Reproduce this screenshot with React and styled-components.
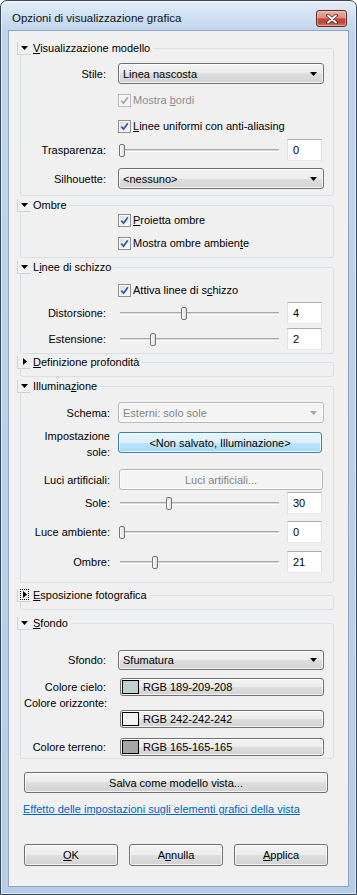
import styled, { createGlobalStyle } from "styled-components";

const FONT = `"Liberation Sans", Arial, sans-serif`;

const GlobalStyle = createGlobalStyle`
  html, body { margin: 0; padding: 0; background: #ffffff; }
  body { font-family: ${FONT}; font-size: 11px; color: #000; }
  * { box-sizing: border-box; }
`;

const Window = styled.div`
  width: 357px;
  height: 895px;
  border: 1px solid #3a4858;
  border-radius: 7px 7px 0 0;
  background: linear-gradient(180deg, #e4eef9 0px, #d2e1f2 14px, #bfd4ec 30px, #b6cde9 100%);
  box-shadow: inset 0 0 0 1px rgba(255, 255, 255, 0.55);
  padding: 0 7px 7px 7px;
  display: flex;
  flex-direction: column;
  overflow: hidden;
`;

const TitleBar = styled.header`
  height: 29px;
  flex: none;
  display: flex;
  align-items: flex-start;
  padding-left: 4px;
`;

const Title = styled.div`
  margin-top: 10px;
  font-size: 11.5px;
  line-height: 14px;
  color: #111;
`;

const CloseBtn = styled.div`
  margin: 9px 2px 0 auto;
  width: 31px;
  height: 17px;
  border: 1px solid #5c2c2a;
  border-radius: 3px;
  background: linear-gradient(180deg, #eab0a3 0%, #dc8c7e 45%, #c74c3d 52%, #bf4536 75%, #d7735f 100%);
  box-shadow: inset 0 0 0 1px rgba(255, 220, 210, 0.45);
  display: flex;
  align-items: center;
  justify-content: center;
`;

const Client = styled.main`
  flex: 1;
  background: #f0f0f0;
  border: 1px solid #8fa4bd;
  padding: 10px 0 0 11px;
  display: flex;
  flex-direction: column;
  align-items: flex-start;
`;

const Group = styled.fieldset`
  width: 314px;
  min-inline-size: 0;
  margin: ${(p) => p.$mt || 0}px 0 0 0;
  padding: 0 0 ${(p) => p.$pb || 0}px 0;
  border: 1px solid #d5dfe5;
  border-radius: 3px;
`;

const Legend = styled.legend`
  margin-left: -4px;
  padding: 0 3px 0 0;
  height: 14px;
  line-height: 14px;
`;

const LegendInner = styled.span`
  display: flex;
  align-items: center;
  gap: 2px;
  height: 14px;
`;

const Toggle = styled.span`
  width: 14px;
  height: 13px;
  display: flex;
  align-items: center;
  justify-content: center;
  border-left: 1px solid #cdd5db;
  border-bottom: 1px solid #cdd5db;
`;

const FocusRing = styled.span`
  width: 9px;
  height: 11px;
  display: flex;
  align-items: center;
  justify-content: center;
  border: 1px dotted #000;
`;

const U = styled.span`
  text-decoration: underline;
  text-underline-offset: 1px;
`;

const Row = styled.div`
  display: flex;
  align-items: ${(p) => p.$align || "center"};
  height: ${(p) => p.$h}px;
  margin-top: ${(p) => p.$mt || 0}px;
`;

const Label = styled.div`
  width: 97px;
  flex: none;
  padding-right: ${(p) => (p.$pr ?? 12)}px;
  text-align: right;
  line-height: ${(p) => p.$lh || 14}px;
  white-space: nowrap;
`;

const FreeLabel = styled.div`
  height: 14px;
  line-height: 14px;
  padding-left: 3px;
`;

const Combo = styled.div`
  width: 206px;
  height: ${(p) => p.$h || 21}px;
  display: flex;
  align-items: center;
  justify-content: space-between;
  padding: 0 6px 0 4px;
  border: 1px solid ${(p) => (p.$disabled ? "#b4b8bb" : "#707070")};
  border-radius: 3px;
  background: ${(p) =>
    p.$disabled
      ? "#f4f4f4"
      : "linear-gradient(180deg, #f3f3f3 0%, #ececec 50%, #dedede 50%, #d2d2d2 100%)"};
  box-shadow: inset 0 0 0 1px rgba(255, 255, 255, 0.75);
  color: ${(p) => (p.$disabled ? "#858585" : "#000")};
`;

const Btn = styled.div`
  width: ${(p) => p.$w}px;
  height: ${(p) => p.$h || 21}px;
  flex: none;
  margin-left: ${(p) => p.$ml || 0}px;
  margin-top: ${(p) => p.$mt || 0}px;
  display: flex;
  align-items: center;
  justify-content: ${(p) => p.$justify || "center"};
  gap: ${(p) => p.$gap || 0}px;
  padding: 0 1px;
  border: 1px solid
    ${(p) => (p.$variant === "hover" ? "#3c7fb1" : p.$variant === "disabled" ? "#b4b8bb" : "#707070")};
  border-radius: 3px;
  color: ${(p) => (p.$variant === "disabled" ? "#858585" : "#000")};
  background: ${(p) =>
    p.$variant === "hover"
      ? "linear-gradient(180deg, #eaf6fd 0%, #d9f0fc 50%, #bee6fd 50%, #a7d9f5 100%)"
      : p.$variant === "disabled"
      ? "#f4f4f4"
      : "linear-gradient(180deg, #f3f3f3 0%, #ececec 50%, #dedede 50%, #d2d2d2 100%)"};
  box-shadow: inset 0 0 0 1px rgba(255, 255, 255, 0.75);
  white-space: nowrap;
`;

const Swatch = styled.span`
  width: 17px;
  height: 14px;
  flex: none;
  border: 1px solid #000;
  background: ${(p) => p.$c};
`;

const SliderBox = styled.div`
  width: 169px;
  height: 100%;
  flex: none;
  display: flex;
  align-items: center;
  padding: 0 8px 0 2px;
`;

const Track = styled.div`
  flex: 1;
  height: 3px;
  position: relative;
  border-top: 1px solid #a9a9a9;
  border-bottom: 1px solid #ffffff;
  background: #d9d9d9;
`;

const Thumb = styled.span`
  position: absolute;
  top: 50%;
  width: 6px;
  height: 13px;
  margin-top: -6.5px;
  border: 1px solid #767676;
  border-radius: 2px;
  background: linear-gradient(90deg, #fdfdfd, #dcdcdc);
`;

const NumBox = styled.div`
  width: 35px;
  height: 22px;
  flex: none;
  background: #fff;
  border: 1px solid;
  border-color: #abadb3 #e2e3ea #e3e9ef #e2e3ea;
  padding: 3px 5px;
  line-height: 14px;
`;

const Box = styled.span`
  width: 13px;
  height: 13px;
  flex: none;
  display: flex;
  align-items: center;
  justify-content: center;
  border: 1px solid ${(p) => (p.$disabled ? "#bcbcbc" : "#8e8f8f")};
  background: ${(p) =>
    p.$disabled ? "#f4f4f4" : "linear-gradient(135deg, #d6d8dc 0%, #eef0f2 55%, #fbfbfb 100%)"};
  box-shadow: inset 0 0 0 1px #f6f6f6;
`;

const CheckText = styled.span`
  margin-left: 2px;
  line-height: 14px;
  color: ${(p) => (p.$disabled ? "#8d8d8d" : "#000")};
`;

const Link = styled.a`
  display: block;
  margin: 8px 0 0 3px;
  height: 16px;
  line-height: 16px;
  color: #0066cc;
  text-decoration: underline;
  cursor: pointer;
`;

const Footer = styled.div`
  display: flex;
  gap: 11px;
  margin: 27px 0 0 4px;
`;

function Arrow({ dir = "down", color = "#000" }) {
  if (dir === "right")
    return (
      <svg width="4" height="7" viewBox="0 0 4 7">
        <polygon points="0,0 4,3.5 0,7" fill={color} />
      </svg>
    );
  return (
    <svg width="7" height="4" viewBox="0 0 7 4">
      <polygon points="0,0 7,0 3.5,4" fill={color} />
    </svg>
  );
}

function Section({ title, open = true, focus, mt, pb, children }) {
  const arrow = <Arrow dir={open ? "down" : "right"} />;
  return (
    <Group $mt={mt} $pb={pb}>
      <Legend>
        <LegendInner>
          <Toggle>{focus ? <FocusRing>{arrow}</FocusRing> : arrow}</Toggle>
          <span>{title}</span>
        </LegendInner>
      </Legend>
      {children}
    </Group>
  );
}

function Check({ children, disabled, mt }) {
  return (
    <Row $h={14} $mt={mt}>
      <Label />
      <Box $disabled={disabled}>
        <svg width="9" height="9" viewBox="0 0 9 9">
          <path
            d="M1.3 4.6 L3.6 7.1 L7.9 1.3"
            fill="none"
            stroke={disabled ? "#a9a9a9" : "#3b57a6"}
            strokeWidth="1.7"
          />
        </svg>
      </Box>
      <CheckText $disabled={disabled}>{children}</CheckText>
    </Row>
  );
}

function ComboRow({ label, value, disabled, mt, h, pr }) {
  return (
    <Row $h={h || 21} $mt={mt}>
      <Label $pr={pr}>{label}</Label>
      <Combo $disabled={disabled} $h={h}>
        <span>{value}</span>
        <Arrow color={disabled ? "#a6a6a6" : "#000"} />
      </Combo>
    </Row>
  );
}

function SliderRow({ label, value, max, mt, pr }) {
  const left = (value / max) * 156 - 1;
  return (
    <Row $h={22} $mt={mt}>
      <Label $pr={pr}>{label}</Label>
      <SliderBox>
        <Track>
          <Thumb style={{ left: `${left}px` }} />
        </Track>
      </SliderBox>
      <NumBox>{value}</NumBox>
    </Row>
  );
}

function ColorRow({ label, rgb, mt }) {
  return (
    <Row $h={18} $mt={mt}>
      <Label>{label}</Label>
      <Btn $w={204} $h={18} $ml={2} $gap={4} $justify="flex-start">
        <Swatch $c={`rgb(${rgb.join(",")})`} />
        <span>RGB {rgb.join("-")}</span>
      </Btn>
    </Row>
  );
}

export default function App() {
  return (
    <>
      <GlobalStyle />
      <Window>
        <TitleBar>
          <Title>Opzioni di visualizzazione grafica</Title>
          <CloseBtn>
            <svg width="12" height="10" viewBox="0 0 12 10">
              <path d="M2 1.5 L10 8.5 M10 1.5 L2 8.5" stroke="#4a2424" strokeWidth="3.6" strokeLinecap="round" />
              <path d="M2 1.5 L10 8.5 M10 1.5 L2 8.5" stroke="#ffffff" strokeWidth="2" strokeLinecap="round" />
            </svg>
          </CloseBtn>
        </TitleBar>
        <Client>
          <Section title={<><U>V</U>isualizzazione modello</>} pb={6}>
            <ComboRow label="Stile:" value="Linea nascosta" mt={8} />
            <Check disabled mt={9}>
              Mostra <U>b</U>ordi
            </Check>
            <Check mt={12}>
              <U>L</U>inee uniformi con anti-aliasing
            </Check>
            <SliderRow label="Trasparenza:" value={0} max={100} mt={6} />
            <ComboRow label="Silhouette:" value="<nessuno>" mt={7} />
          </Section>

          <Section title="Ombre" mt={2} pb={7}>
            <Check mt={1}>
              <U>P</U>roietta ombre
            </Check>
            <Check mt={9}>
              Mostra ombre ambien<U>t</U>e
            </Check>
          </Section>

          <Section title={<>L<U>i</U>nee di schizzo</>} mt={2} pb={3}>
            <Check mt={9}>
              Attiva linee di s<U>c</U>hizzo
            </Check>
            <SliderRow label="Distorsione:" value={4} max={10} mt={5} />
            <SliderRow label="Estensione:" value={2} max={10} mt={4} />
          </Section>

          <Section title={<><U>D</U>efinizione profondità</>} open={false} mt={1} pb={7} />

          <Section title={<>Illumina<U>z</U>ione</>} mt={2} pb={9}>
            <ComboRow label="Schema:" value="Esterni: solo sole" disabled mt={9} pr={8} />
            <Row $h={32} $mt={5} $align="flex-start">
              <Label $pr={8} $lh={16}>
                Impostazione
                <br />
                sole:
              </Label>
              <Btn $w={204} $mt={4} $variant="hover">
                <span>&lt;Non salvato, Illuminazione&gt;</span>
              </Btn>
            </Row>
            <Row $h={21} $mt={9}>
              <Label $pr={8}>Luci artificiali:</Label>
              <Btn $w={204} $ml={1} $variant="disabled">
                <span>Luci artificiali...</span>
              </Btn>
            </Row>
            <SliderRow label="Sole:" value={30} max={100} mt={2} pr={8} />
            <SliderRow label="Luce ambiente:" value={0} max={100} mt={7} pr={8} />
            <SliderRow label="Ombre:" value={21} max={100} mt={8} pr={8} />
          </Section>

          <Section title={<><U>E</U>sposizione fotografica</>} open={false} focus mt={5} pb={7} />

          <Section title={<><U>S</U>fondo</>} mt={6} pb={2}>
            <ComboRow label="Sfondo:" value="Sfumatura" mt={20} h={20} />
            <ColorRow label="Colore cielo:" rgb={[189, 209, 208]} mt={8} />
            <FreeLabel>Colore orizzonte:</FreeLabel>
            <ColorRow label="" rgb={[242, 242, 242]} />
            <ColorRow label="Colore terreno:" rgb={[165, 165, 165]} mt={10} />
          </Section>

          <Btn $w={304} $ml={4} $mt={13}>
            <span>Salva come modello vista...</span>
          </Btn>

          <Link>Effetto delle impostazioni sugli elementi grafici della vista</Link>

          <Footer>
            <Btn $w={94} $h={22}>
              <span>
                <U>O</U>K
              </span>
            </Btn>
            <Btn $w={94} $h={22}>
              <span>
                A<U>n</U>nulla
              </span>
            </Btn>
            <Btn $w={94} $h={22}>
              <span>
                <U>A</U>pplica
              </span>
            </Btn>
          </Footer>
        </Client>
      </Window>
    </>
  );
}
